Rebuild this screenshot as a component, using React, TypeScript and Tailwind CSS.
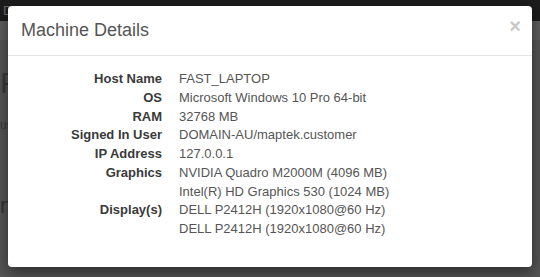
export default function App() {
  const rows: [string, string[]][] = [
    ["Host Name", ["FAST_LAPTOP"]],
    ["OS", ["Microsoft Windows 10 Pro 64-bit"]],
    ["RAM", ["32768 MB"]],
    ["Signed In User", ["DOMAIN-AU/maptek.customer"]],
    ["IP Address", ["127.0.0.1"]],
    ["Graphics", ["NVIDIA Quadro M2000M (4096 MB)", "Intel(R) HD Graphics 530 (1024 MB)"]],
    ["Display(s)", ["DELL P2412H (1920x1080@60 Hz)", "DELL P2412H (1920x1080@60 Hz)"]],
  ];
  return (
    <div className="relative w-[540px] h-[277px] overflow-hidden bg-[#555555]" style={{ fontFamily: '"Liberation Sans", Arial, sans-serif' }}>
      <div className="h-[21px] bg-[#1c1c1c] flex items-center px-[3px] text-[13px] text-[#6a6a6a] gap-6">
        <span>Download</span>
        <span>Connect</span>
      </div>
      <div className="h-[19px] bg-[#5e5e5e]" />
      <div className="pl-0 pt-[28px] text-[30px] leading-none text-[#3a3a3a]">F</div>
      <div className="pt-[18px] text-[12px] text-[#3a3a3a]">us</div>
      <div className="pt-[55px] text-[22px] text-[#333]">ni</div>
      <div className="absolute left-[8px] top-[6px] w-[524px] h-[261px] bg-white rounded-[4px] shadow-[0_5px_15px_rgba(0,0,0,0.5)]">
        <div className="relative h-[50px] border-b border-[#e5e5e5] flex items-center pl-[13px]">
          <span className="text-[18px] text-[#555]">Machine Details</span>
          <span className="absolute right-[11px] top-[10px] text-[20px] font-bold text-[#c8c8c8] leading-none">×</span>
        </div>
        <div className="pt-[14px] pl-[13px] grid grid-cols-[141px_1fr] gap-x-[17px] text-[13px] leading-[18.75px]">
          {rows.map(([label, vals]) => (
            <>
              <div key={label + "l"} className="text-right font-bold text-[#3a3a3a]">{label}</div>
              <div key={label + "v"} className="text-[#555]">
                {vals.map((v, i) => (
                  <div key={i}>{v}</div>
                ))}
              </div>
            </>
          ))}
        </div>
      </div>
    </div>
  );
}
